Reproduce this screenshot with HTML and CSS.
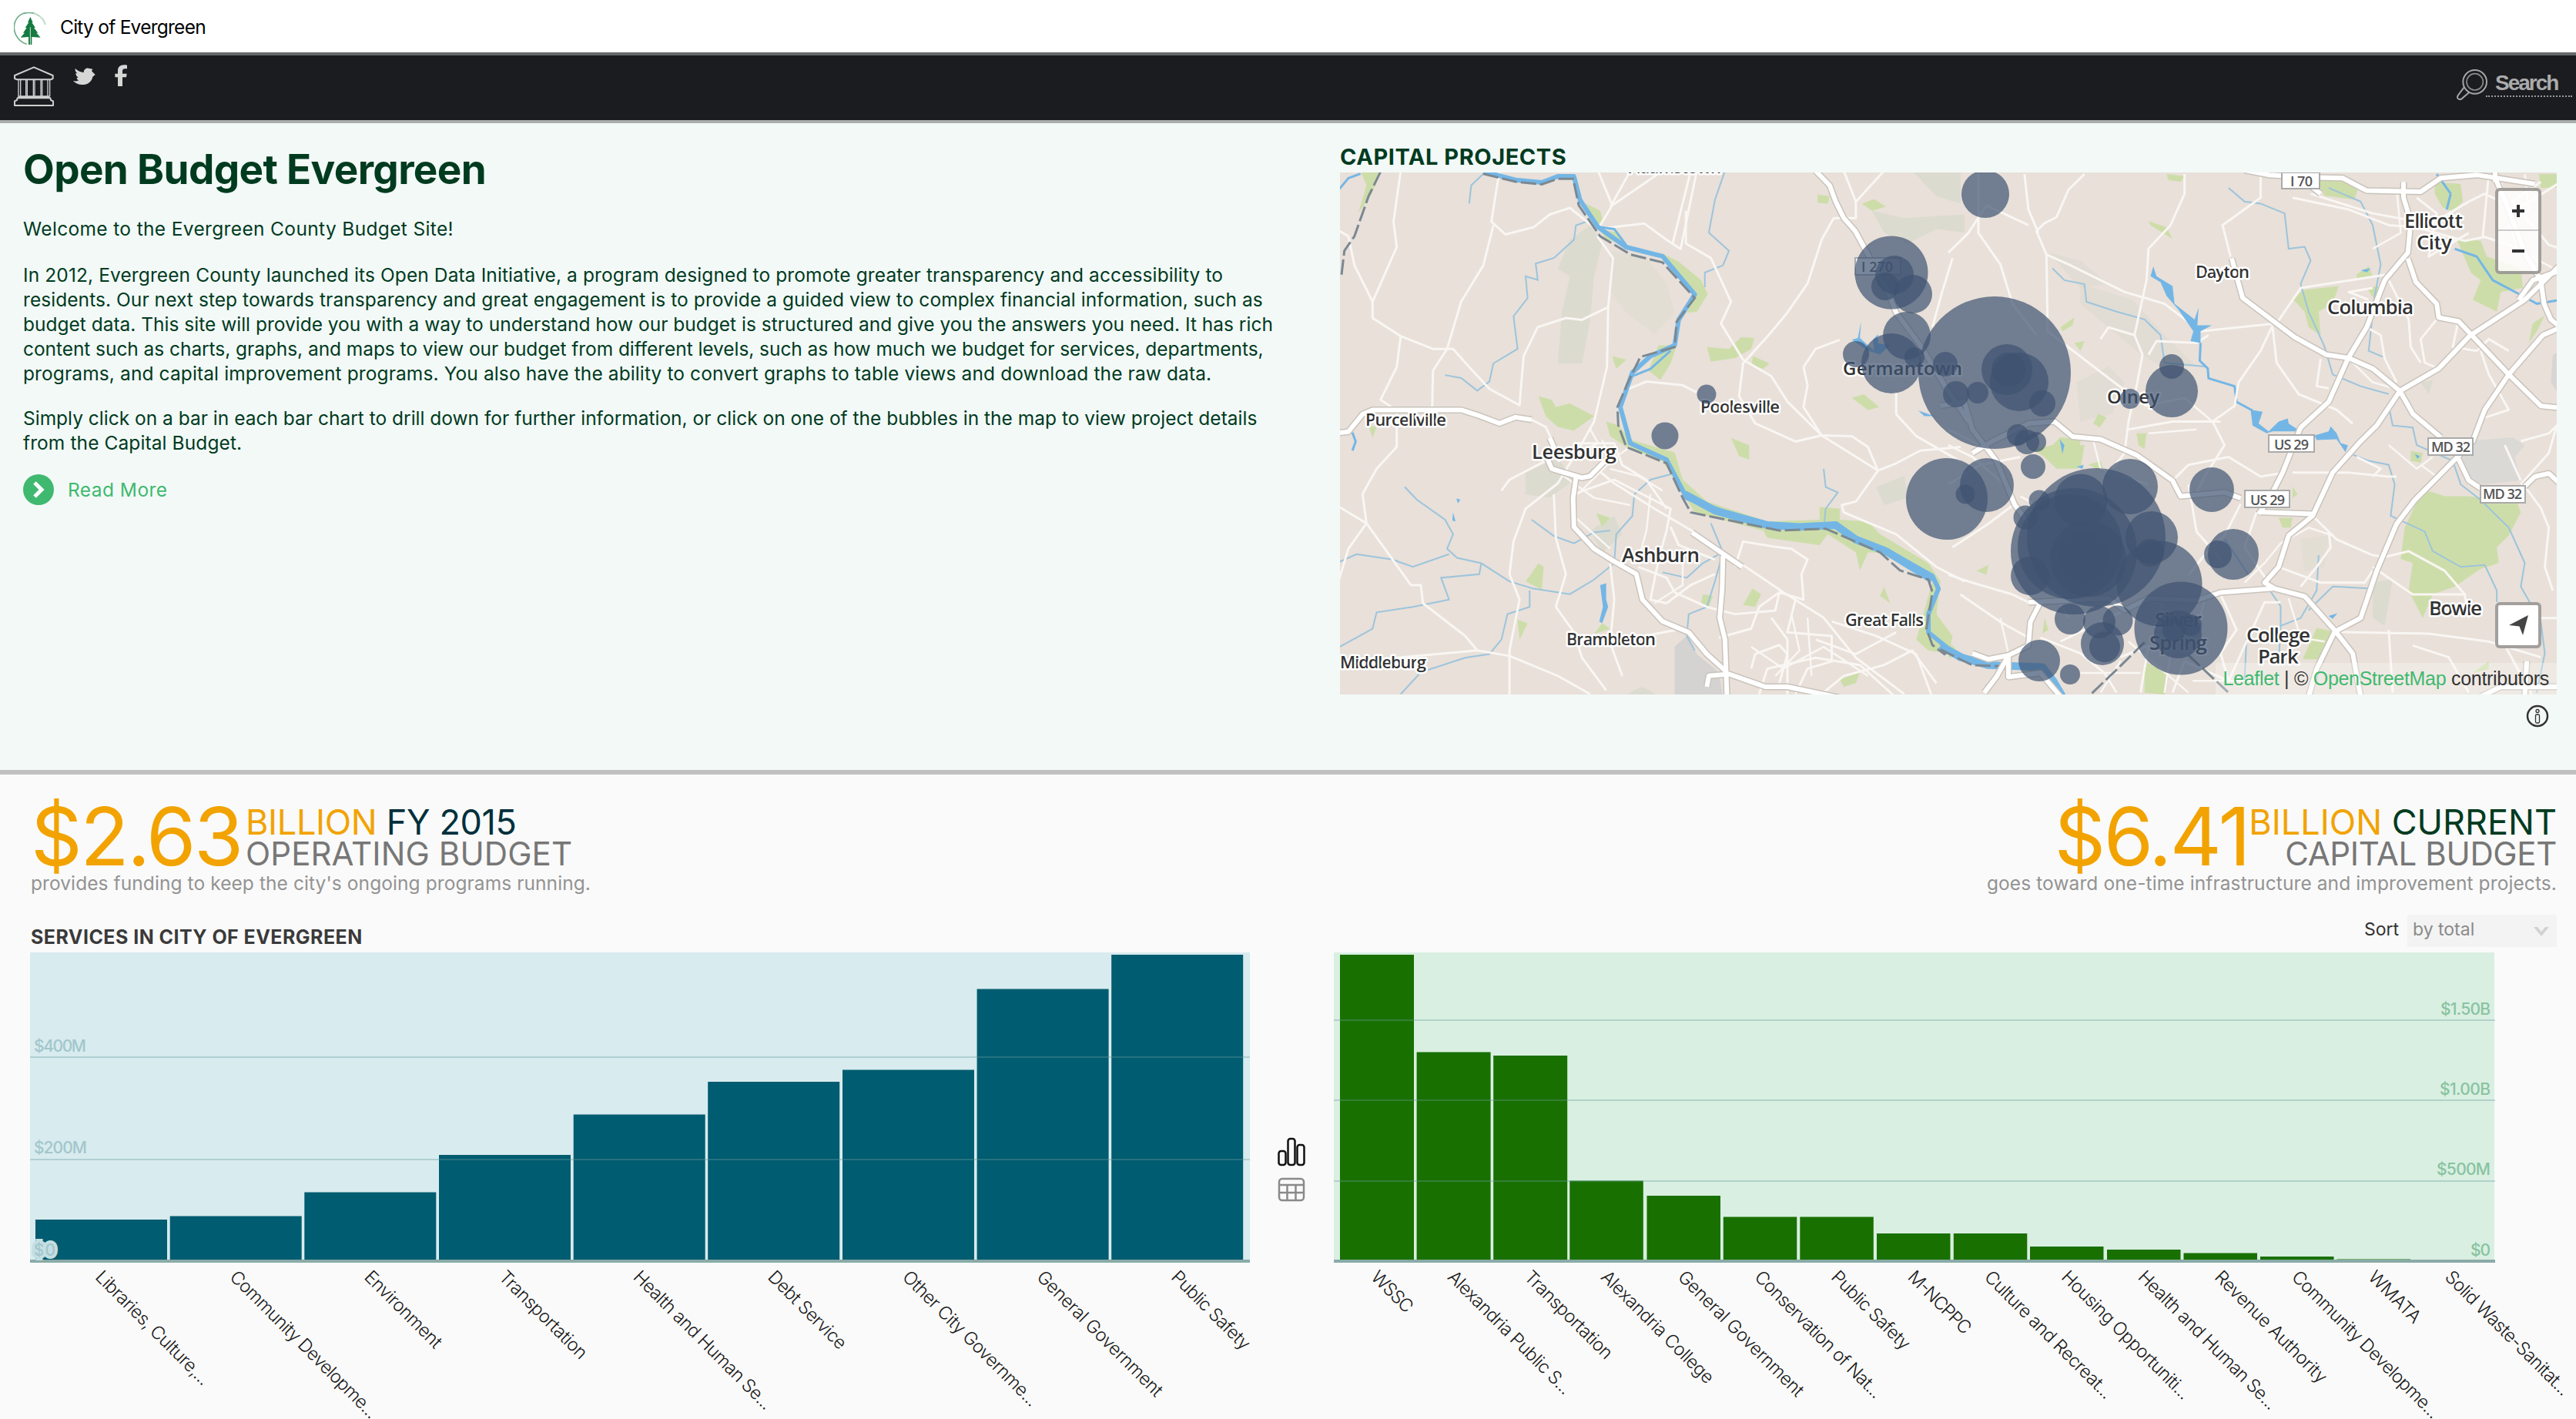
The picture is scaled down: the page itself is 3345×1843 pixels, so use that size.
FILE: index.html
```html
<!DOCTYPE html>
<html lang="en">
<head>
<meta charset="utf-8">
<title>City of Evergreen</title>
<link rel="stylesheet" href="styles.css">
</head>
<body>
<header class="site-header">
  <svg class="logo" width="42" height="42" viewBox="54 48 126 126">
    <path d="M176 96C166 58 128 42 92 52C58 64 46 104 62 136C70 152 84 166 104 172" fill="none" stroke="#6fae88" stroke-width="5"/>
    <path d="M176 100C170 72 152 56 132 51" fill="none" stroke="#fff" stroke-width="5" opacity=".6"/>
    <path d="M118 66L128 88L124 88L138 108L132 108L148 128L142 128L158 146L124 144V174H111V144L80 146L96 128L90 128L104 108L98 108L112 88L108 88Z" fill="#157a41"/>
    <path d="M118 106V174" stroke="#cfe6d7" stroke-width="3"/>
  </svg>
  <span class="site-name">City of Evergreen</span>
</header>
<nav class="navbar">
  <svg class="nav-home" width="52" height="52" viewBox="54 258 156 156" fill="none" stroke="#cfcfcf" stroke-width="6" stroke-linejoin="round">
    <path d="M132 262L206 294V306L198 310H66L57 306V294Z"/>
    <path d="M72 310V375M80 310V375M101 310V375M106 310V375M130 310V375M135 310V375M159 310V375M164 310V375M186 310V375M194 310V375" stroke-width="4"/>
    <path d="M70 376H194M68 382H196L198 390L207 394V411H57V394L66 390Z"/>
  </svg>
  <svg class="nav-tw" width="31" height="24" viewBox="283 262 93 72" fill="#d6d6d6"><path d="M294 268C302 276 314 282 327 284C326 272 338 262 350 268L362 270L358 278L372 292L362 300C358 322 340 332 318 331C304 330 292 324 286 316C294 318 302 318 308 314C302 312 300 308 300 304L306 303C298 298 296 292 296 286L302 287C295 281 293 275 294 268Z"/></svg>
  <svg class="nav-fb" width="16" height="28" viewBox="447 252 48 84" fill="#d6d6d6"><path d="M459 336V301H448V287H459V276C459 260 470 250 495 254V268C480 266 477 270 477 278V287H494L492 301H477V336Z"/></svg>
  <div class="search">
    <svg width="40" height="40" viewBox="135 90 120 120" fill="none" stroke="#a5a5a5">
      <circle cx="206" cy="139" r="46" stroke-width="6"/><circle cx="206" cy="139" r="32" stroke-width="5" stroke="#8a8a8a"/>
      <path d="M164 160L140 192Q134 204 146 207Q154 209 160 200L184 180" stroke-width="6"/>
    </svg>
    <span>Search</span>
  </div>
</nav>
<section class="hero">
  <div class="intro">
    <h1>Open Budget Evergreen</h1>
    <p class="welcome">Welcome to the Evergreen County Budget Site!</p>
    <p class="about"><span class="l1">In 2012, Evergreen County launched its Open Data Initiative, a program designed to promote greater transparency and accessibility to</span><br><span class="l2">residents. Our next step towards transparency and great engagement is to provide a guided view to complex financial information, such as</span><br><span class="l3">budget data. This site will provide you with a way to understand how our budget is structured and give you the answers you need. It has rich</span><br><span class="l4">content such as charts, graphs, and maps to view our budget from different levels, such as how much we budget for services, departments,</span><br><span class="l5">programs, and capital improvement programs. You also have the ability to convert graphs to table views and download the raw data.</span></p>
    <p class="howto"><span class="l6">Simply click on a bar in each bar chart to drill down for further information, or click on one of the bubbles in the map to view project details</span><br><span class="l7">from the Capital Budget.</span></p>
    <a class="more"><svg width="40" height="40" viewBox="0 0 40 40"><circle cx="20" cy="20" r="20" fill="#3fb96f"/><path d="M15 11L24 20L15 29" fill="none" stroke="#fff" stroke-width="5"/></svg><span>Read More</span></a>
  </div>
  <div class="projects">
    <h2>CAPITAL PROJECTS</h2>
    <div class="map">
    <svg width="1580" height="678" viewBox="0 0 1580 678">
      <defs>
        <g id="mainA" transform="matrix(.523 0 0 .4719 -10 -54)">
          <path d="M1200 110L1235 150L1250 195L1270 240L1298 275L1330 340L1370 420L1400 500L1460 590L1520 700L1580 800"/>
          <path d="M10 832L40 828L75 780L100 768L320 768L360 782L415 805L455 788L495 795"/>
          <path d="M540 845L550 870L535 905L545 930L620 955L640 950L680 905"/>
          <path d="M605 955L598 1010L600 1090L650 1150L700 1185L755 1220L770 1290L820 1350L885 1380L930 1440L980 1490"/>
          <path d="M970 1170L968 1260L962 1340L975 1400L980 1560"/><path d="M893 1105L1018 1200"/>
          <path d="M930 1530L935 1500L985 1495L1075 1530L1130 1530L1260 1560"/>
        </g>
        <g id="mainB" transform="matrix(.5198 0 0 .5102 790 -54)">
          <path d="M740 100L800 112L900 118L985 120L1045 152L1180 155L1230 120L1320 112L1465 135"/>
          <path d="M905 140L930 160"/><path d="M1137 130L1137 170L1155 230L1148 310L1090 380L1045 500L998 580L950 690L880 755L835 870L800 940L775 975"/>
          <path d="M708 325L735 425L800 475L865 525L945 570L1000 578L1060 605L1128 662L1160 720L1230 780"/>
          <path d="M1148 325L1168 385L1220 440L1225 475L1275 485L1400 620L1480 700L1530 705"/>
          <path d="M1530 340L1440 430L1302 522L1225 605L1128 662L1070 750L1030 790L960 870L910 980L850 1030L825 1110L790 1150L815 1165L890 1185L960 1265L1010 1330L1030 1440"/>
          <path d="M1530 500L1485 520L1400 620L1340 710L1310 790L1272 830L1165 940L1120 1000L1070 1120L1030 1240L965 1275L920 1370L900 1440"/>
          <path d="M1272 830L1300 890L1330 910M1440 905L1465 880L1500 872L1530 900"/>
          <path d="M-20 700L40 690L60 760L120 840L165 950L200 1000"/>
          <path d="M60 820L110 790L200 745L265 740L310 778L380 785L470 825L560 890L580 930L690 920L730 935M775 970L910 975"/>
          <path d="M200 1200L400 1190L440 1220L500 1190L620 1195L680 1175L810 1165"/>
          <path d="M60 1330L100 1345L150 1335L200 1310L205 1250L230 1200"/><path d="M90 1430L120 1390L150 1335L150 1390L230 1380L280 1440"/>
          <path d="M1366 100V130M1366 120L1400 200L1440 310L1480 380L1488 440L1505 480L1530 500M1530 355L1460 380L1425 430"/>
          <path d="M1445 1350L1440 1440M1330 1440L1380 1415L1530 1415"/>
        </g>
      </defs>
      <rect width="1580" height="678" fill="#e8e0d9"/>
      <g transform="matrix(.523 0 0 .4719 -10 -54)">
        <g class="wood">
          <path d="M590 300L640 260L670 310L650 400L640 520L620 640L560 640L570 500L590 400L560 380Z"/><path d="M1340 220L1420 240L1570 230V280L1500 270L1430 310L1370 280Z"/>
          <path d="M480 940L560 900L600 960L540 1010L480 1000Z"/><path d="M1350 980L1420 950L1430 1010L1370 1030Z"/><path d="M1440 110H1560V200L1500 180Z"/><path d="M640 1100L700 1060L720 1110L670 1160Z"/><path d="M850 1420L880 1390L905 1440L960 1490L970 1560H850Z" fill="#d4d3d2"/><path d="M740 1545L770 1530L820 1560H730Z"/>
          <path d="M690 330L780 350L830 420L850 500L800 560L730 500L690 440Z" opacity=".5"/>
        </g>
        <g class="park">
          <path d="M70 110L120 115L95 180L65 225L85 150Z"/><path d="M630 200L665 220L672 250L655 260Z"/><path d="M815 335L860 360L915 410L932 450L905 498L880 500L905 450L860 390Z"/><path d="M665 270L710 280L730 310L680 300Z"/>
          <path d="M512 730L545 740L555 760L590 750L650 785L600 825L560 815L530 785Z"/><path d="M930 595L985 600L1015 568L1048 570L1040 600L1000 625L940 635Z"/><path d="M1045 620L1085 640L1070 655L1040 645Z"/><path d="M695 620L730 630L705 655Z"/><path d="M810 590L855 590L840 640L815 685L785 660Z"/>
          <path d="M1205 175L1235 180L1230 200L1205 198Z"/><path d="M1315 200L1345 188L1375 208L1340 220Z"/><path d="M1290 735L1320 725L1358 760L1330 768Z"/><path d="M990 845L1035 865L1035 905L1010 895Z"/>
          <path d="M512 1190L525 1200L520 1262L480 1240Z"/><path d="M655 1052L690 1065L670 1090Z"/><path d="M1043 1260L1065 1275L1050 1310L1020 1305Z"/><path d="M460 1345L485 1355L465 1400Z"/><path d="M650 1385L670 1355L690 1370Z"/>
          <path d="M680 800L710 810L740 850L850 885L870 960L930 1020L1080 1075L1210 1070V1035L1260 1040L1260 1070L1330 1075L1360 1110L1480 1190L1510 1240L1500 1330L1540 1390L1530 1440L1480 1430L1450 1400L1490 1240L1360 1160L1330 1160L1310 1210L1300 1160L1230 1110L1210 1140L1080 1120L1070 1100L900 1050L850 960L820 910L730 870L690 840Z"/>
          <path d="M920 1275L945 1280L935 1310L915 1305Z"/><path d="M1370 1255L1385 1300L1360 1280Z"/><path d="M1260 1510L1310 1490L1300 1520L1270 1530Z"/><path d="M90 810L110 815L100 845Z"/>
        </g>
        <g class="stream">
          <path d="M630 250L605 260L600 300L550 350L505 365L510 410L480 400L485 460L450 510L460 600L400 640L390 690L360 715L320 680L280 672"/>
          <path d="M975 110L950 190L935 280L985 330L970 370L925 390L925 430"/><path d="M375 118L345 150L340 200"/>
          <path d="M180 980L210 1015L280 1070L300 1110L285 1150L310 1175L370 1190L440 1240L500 1260L590 1275L650 1235L700 1190L705 1110L745 1060L750 1000L790 960L840 945"/>
          <path d="M10 1190L60 1165L150 1180L200 1200L290 1165M370 1190L365 1220L270 1230L290 1290L200 1310L110 1325L100 1370L10 1425"/>
          <path d="M490 1265L490 1310L435 1330L420 1400L390 1440L330 1450L220 1490L170 1550"/><path d="M495 1070L550 1115L600 1135L650 1105L690 1100"/><path d="M940 1080L970 1160L950 1240L930 1310L885 1330L880 1390L900 1430"/><path d="M820 1215L880 1230L920 1190L960 1165"/><path d="M1220 930L1225 980L1255 995L1225 1040L1222 1075"/>
        </g>
        <g class="road">
          <path d="M170 110L152 250L160 320L100 470L100 515L170 565L250 600L300 600L340 650L390 710L465 755L475 620L510 540L580 515L620 520L685 485L697 350L658 290"/>
          <path d="M415 110L395 250L430 285L500 265L540 230L590 212L655 270L775 255L830 300L865 325L905 110M170 565L160 650L120 740L160 770V870L110 930L75 1000L85 1080L40 1150L10 1260"/>
          <path d="M400 260L375 370L320 470L285 600L250 660L248 760"/><path d="M660 110L695 205L820 110M695 205L665 260M740 110L690 210M845 310L890 110M878 220V310L940 350L990 470L965 530L1020 630L1090 675L1130 745L1215 838L1355 935L1400 915L1460 880L1560 870"/>
          <path d="M685 485L682 650L650 800L620 860L560 970L480 1040L450 1130L440 1220L465 1290L440 1430V1560"/>
          <path d="M1245 240L1215 300L1180 420L1130 500L1085 560L1020 640L1010 730L1050 805L1150 855L1215 838"/><path d="M1215 838L1290 840L1330 870L1355 935L1300 1020L1265 1030L1270 1050L1400 1110L1500 1200L1570 1240"/>
          <path d="M735 710L780 690L870 700L905 720M1170 650L1180 700L1170 760L1215 838M1170 650L1200 600L1260 575"/>
          <path d="M10 1030L85 1080L150 1180L195 1250H220L225 1300L330 1390L360 1430L10 1465M360 1430L440 1445L560 1500L640 1550"/>
          <path d="M495 795L530 815L545 850M10 270L40 290L55 370L100 470M550 1000L555 1120L580 1220L555 1310L600 1380L620 1450L680 1540"/>
          <path d="M650 925L700 970L800 1040L900 1105L1120 1270L1220 1340L1300 1450L1420 1550M600 1000L700 960L840 1040L830 1100L810 1180L790 1290L830 1300L890 1250L950 1220M600 860L700 860L720 920L780 960L830 1040"/>
          <path d="M760 1200L830 1230L850 1270L930 1310L1000 1330L1100 1320L1110 1270L1170 1290L1165 1220L1180 1180L1140 1150L1100 1145L1020 1130L1000 1200"/><path d="M690 1190L700 1290L690 1410L720 1500M775 1390L870 1370M960 1395L1040 1370L1060 1310L1110 1270"/>
          <path d="M1150 1290L1130 1380L1240 1390L1240 1460L1180 1480L1150 1550M1240 1350L1350 1390L1450 1440L1490 1560M1040 1480L1050 1440L1110 1415L1130 1440L1110 1520M1200 1400L1300 1440L1400 1380M1060 1550L1080 1480L1200 1450L1310 1470L1400 1560"/>
          <path d="M840 1090L860 1140L950 1180M1215 1550L1270 1500L1370 1470L1440 1430L1500 1520M1090 1340L1130 1400V1550M535 905L440 960L420 990M1540 350L1515 440L1490 540M1270 110L1300 195V240L1245 240M1300 195L1370 110M1400 720V780L1450 840L1560 910"/>
        </g>
        <g class="road small"><path d="M560 910L660 860L640 820M575 950L650 1010L740 1030M610 1000L700 900L740 870M670 850L690 900L640 950M690 930L760 950L820 990M790 1000L780 1100L760 1180M870 1170L870 1250L800 1300M600 1060L690 1150M1180 1340L1190 1500M1040 1420L1120 1480L1220 1420L1330 1500M1140 1330L1160 1430L1100 1500"/></g>
        <path class="river" d="M375 112L455 135L520 142L560 125L600 125L615 190L660 265L730 320L820 345L900 450L860 520L850 590L790 620L745 665L715 760L740 860L830 905L880 1010L1000 1060L1110 1090L1250 1085L1300 1120L1370 1150L1490 1225L1505 1260L1480 1330L1480 1380L1530 1425L1580 1455"/>
        <path class="river thick" d="M875 1000L950 1045L1080 1085L1160 1090L1250 1085L1300 1125L1380 1160L1490 1235"/>
        <path class="river thin" d="M10 170L40 130L70 118M745 675L790 655L840 605M665 265L700 270L730 315M50 830L58 855L50 880"/>
        <g class="water"><path d="M665 1250L680 1245V1290L685 1310L670 1355L663 1350L672 1310Z"/><path d="M1313 525L1310 570L1345 605L1342 575L1355 560L1355 585L1385 590L1360 615L1330 605L1290 575L1305 570Z"/><path d="M1455 770L1495 785L1470 785Z"/><path d="M308 1012L318 1015L312 1025ZM300 1050L306 1075L298 1072Z"/></g>
        <path class="border" d="M375 118L455 140L520 147L560 132L598 132L612 205L665 290L740 340L820 362L900 460L855 525L850 595L765 622L735 690L708 760L710 810L730 870L830 915L870 1010L890 1050L1000 1075L1110 1100L1225 1095L1360 1160L1410 1210L1480 1235L1490 1270L1475 1370L1490 1415L1520 1440L1535 1428L1580 1465"/>
        <path class="border" d="M120 112L90 180L55 290L30 330L22 405"/>
      </g>
      <g transform="matrix(.5198 0 0 .5102 790 -54)">
        <g class="wood"><path d="M330 390L460 430L540 520L620 600L530 600L470 560L330 440Z" opacity=".6"/><path d="M250 310L330 330L400 390L330 400Z" opacity=".6"/><path d="M320 640L400 600L440 640L410 720L330 740Z" opacity=".6"/><path d="M1060 1150L1110 1140L1090 1260L1060 1240Z"/><path d="M1180 640L1210 635L1200 670Z"/><path d="M1290 790L1410 780L1440 800L1415 830L1430 890L1335 900L1300 880L1275 830Z" fill="#dbd9d5"/><path d="M1510 570L1530 560V680L1505 640Z" fill="#d8d5d4"/><path d="M880 1040L950 1030L940 1110L890 1120Z" opacity=".5"/></g>
        <g class="park">
          <path d="M1185 912L1240 930L1300 930L1420 945L1430 970L1400 1030L1370 1060L1375 1100L1330 1115L1265 1160L1210 1180L1185 1240L1150 1170L1160 1100L1130 1090L1140 1010Z"/>
          <path d="M920 125L975 120L1025 140L1015 175L940 165Z"/><path d="M1215 130L1280 135L1285 180L1260 205L1235 195L1215 160Z"/><path d="M1270 275L1330 280L1345 320L1430 350L1435 400L1380 410L1370 460L1310 430L1330 380L1305 360Z"/><path d="M1475 110H1520V145H1480Z"/>
          <path d="M545 110L590 115L580 130L550 125Z"/><path d="M500 230L545 245L560 275L505 240Z"/><path d="M885 405L975 395L960 440L925 460L930 520L900 500L890 460L862 430Z"/><path d="M1020 365L1050 345L1060 370L1020 375Z"/><path d="M1045 400L1075 395L1065 430Z"/>
          <path d="M210 810L260 800L280 780L330 785L325 860L270 860L240 830Z"/><path d="M350 850L380 840L390 870Z"/><path d="M375 720L395 730L378 755L362 745Z"/><path d="M280 500L315 475L310 495L285 510Z"/><path d="M315 540L340 535L330 560Z"/><path d="M470 770L495 770L490 810L475 800Z"/><path d="M280 800L340 800L330 860Z"/>
          <path d="M825 985L860 985L855 1010L835 1010Z"/><path d="M920 1265L965 1275L930 1345L885 1345Z"/><path d="M1155 815L1185 820L1180 845L1155 840Z"/><path d="M490 1350L545 1380L540 1435L490 1430Z"/><path d="M860 905L872 925L860 935Z"/><path d="M1490 470L1470 510L1450 540L1460 490Z"/><path d="M1310 1380L1350 1350L1350 1370Z"/><path d="M0 1300L20 1320L10 1340H0Z"/><path d="M240 1240L250 1270L235 1280Z"/><path d="M70 1120L100 1105L95 1130Z"/>
        </g>
        <g class="stream">
          <path d="M700 145L740 180L780 185L840 210L850 300L890 295L905 330L880 390L900 460L940 550L960 620L1030 650L1100 670"/><path d="M260 350L290 380L340 390L345 435L420 460L490 480L530 520L540 590L640 600"/>
          <path d="M950 145L1030 180L1060 240L1080 340L1065 420L1050 560L1085 575"/><path d="M1000 820L1050 840L1100 850L1115 900L1105 980L1190 1020L1210 1070L1280 1110L1340 1105L1370 1170V1205"/>
          <path d="M1130 660L1100 700L1110 750L1160 755L1170 800L1260 840L1280 900L1330 940L1400 1010L1440 1100L1430 1160L1480 1250L1490 1330L1470 1430"/><path d="M925 1080L920 1170L880 1240L830 1260L825 1360M1060 1165L960 1160L900 1220M800 1165L830 1210V1260M690 1040L750 1130M745 1290L740 1400"/>
        </g>
        <path class="river thin" d="M1255 160L1245 200M1265 300L1320 320L1360 380L1425 415L1470 440L1530 430M1220 110L1255 160M630 540L628 585L648 605L650 630L715 650L720 690L760 712"/>
        <g class="road">
          <path d="M340 110L300 150L270 220L240 235L220 255L245 315L300 340L440 410L540 440L630 510L820 490L880 400L1100 365"/><path d="M190 110L200 200L225 260M75 110V260L130 340L160 440L220 520M0 310L50 260L95 190L200 240M590 110V160L555 240L500 300L495 380L465 520L485 570L470 650L450 740L440 820L410 860"/>
          <path d="M780 110V170L685 240L705 320M245 315L248 510L350 590L440 660M465 520L400 500L380 530M500 570L520 535L620 540L650 520"/><path d="M810 495L780 560L725 640L715 700L660 740L690 800L640 880L620 920"/>
          <path d="M810 500L820 590L875 670L970 710L1010 745M860 170L1000 200L1100 240L1170 245M905 160L1060 210L1140 225M1150 240L1290 280L1340 270L1430 300"/>
          <path d="M1200 240L1300 180L1340 160L1420 200L1530 130M1350 110L1335 270M1170 170L1220 210L1200 320L1300 260M1480 130L1410 180L1500 290L1530 300"/>
          <path d="M1045 500L1080 520L1090 580L1120 640M1100 380L1150 480L1155 550L1180 590M1220 480L1180 530L1190 590L1225 605M1050 430L1000 410L1060 400M1275 480L1260 550L1320 560L1350 530L1400 560M1330 560L1350 620L1400 710L1340 730"/>
          <path d="M930 580L920 650L950 655M840 870L780 880L700 830L600 850L560 890M860 870L1000 870L1100 880L1120 880M730 950L690 1030L640 1080L600 1130M770 970L740 1060L800 1150M1020 830L1080 860L1060 880M910 980L970 1040L1060 1080L1090 1085M1090 1085L1150 1070L1240 1120L1290 1180L1300 1240M825 1110L930 1150L1040 1150L1060 1120"/>
          <path d="M950 1020L955 1060L920 1110L880 1160M680 1180L720 1270L680 1330L700 1400M0 1130L60 1150L160 1180L200 1200M10 1060L100 1000L165 950M30 1180L130 1250L200 1290M230 1290L330 1330L390 1380L420 1430"/>
          <path d="M280 1300L500 1190M430 1340L500 1310L480 1430M560 1430L590 1350L700 1400L790 1200L830 1200M960 1275L1200 1280L1350 1300L1480 1340M1100 1270L1110 1430M1160 1310L1250 1340L1300 1430M1370 1200L1385 1300L1460 1440M1370 1205L1450 1240L1520 1240M1060 1110L1160 1180L1290 1180"/>
          <path d="M1390 800L1430 890M1430 900L1500 820L1520 750M1440 905L1480 960L1500 1010L1490 1110L1510 1170M1430 790L1500 770L1530 740M0 760L60 790L130 840M0 800L60 830L140 900M0 900L80 850L180 830M180 930L300 1000M600 900L620 1020L680 1090M680 740L560 740L450 760"/>
        </g>
        <g class="road small"><path d="M1380 130L1420 300L1530 360M1440 110L1450 200L1380 260M1120 150L1130 260L1060 300M490 700L590 680L660 740M500 770L620 760M360 780L380 860L500 900M1180 850L1220 880L1200 910M740 1150L790 1100L830 1050L900 1010L960 1030M530 1200L560 1300L540 1430M640 1200L620 1260M850 1190L880 1290L940 1300M330 1380L480 1380M610 1400L800 1400M380 1430L430 1350M450 1300L600 1430M210 1200L270 1190L300 1240M130 1240L150 1330M1210 830L1170 860L1100 800M1000 580L1060 640L1130 660"/></g>
        <g class="water"><path d="M512 345L520 370L560 395L565 440L615 480L625 450L622 495L658 495L630 510L630 540L605 535L612 510L575 455L545 420L530 385L505 370Z"/><path d="M755 710L785 715L775 745L800 765L825 740L848 732L850 745L880 765L810 765L795 770L760 750Z"/><path d="M915 775L950 765L955 752L970 770L980 795L998 800L992 818L970 785L920 787Z"/><path d="M278 785L290 800L285 822Z"/><path d="M320 855L338 850L335 860Z"/><path d="M1165 822L1178 828L1172 835Z"/><path d="M950 1235L972 1228L960 1242Z"/><path d="M1030 355L1055 350L1045 360Z"/></g>
        <path class="river thick" d="M-20 1310L30 1340L100 1360L235 1365L262 1400L285 1440"/>
        <path class="border" d="M490 1302L430 1362L350 1440M600 1335L700 1430M-20 1320L60 1360L140 1363"/>
      </g>
      <use href="#mainA" class="casing"/><use href="#mainB" class="casing"/>
      <use href="#mainA" class="core"/><use href="#mainB" class="core"/>
      <g class="shields"><rect x="669" y="111" width="59" height="22"/><rect x="1223" y="0" width="49" height="21"/><rect x="1206" y="341" width="59" height="22"/><rect x="1175" y="413" width="58" height="22"/><rect x="1413" y="345" width="58" height="22"/><rect x="1481" y="407" width="58" height="22"/></g>
      <g class="roadno"><text x="677" y="129" textLength="41">I 270</text><text x="1234" y="18" textLength="29">I 70</text><text x="1213" y="360" textLength="45">US 29</text><text x="1182" y="432" textLength="45">US 29</text><text x="1417" y="363" textLength="51">MD 32</text><text x="1484" y="424" textLength="51">MD 32</text></g>
      <g class="places">
        <text x="375" y="1" textLength="120">Adamstown</text>
        <text x="653" y="263" textLength="155" class="md">Germantown</text>
        <text x="468" y="312" textLength="103">Poolesville</text><text x="33" y="329" textLength="105">Purcellville</text><text x="249" y="372" textLength="110" class="lg">Leesburg</text>
        <text x="366" y="506" textLength="101" class="lg">Ashburn</text><text x="656" y="589" textLength="102">Great Falls</text><text x="294" y="614" textLength="116">Brambleton</text><text x="0" y="644" textLength="112">Middleburg</text>
        <text x="1111" y="137" textLength="70">Dayton</text><text x="1382" y="72" textLength="76" class="lg">Ellicott</text><text x="1398" y="100" textLength="46" class="lg">City</text><text x="1282" y="184" textLength="112" class="lg">Columbia</text><text x="996" y="300" textLength="68" class="md">Olney</text>
        <text x="1414" y="575" textLength="69" class="lg">Bowie</text><text x="1177" y="610" textLength="83" class="lg">College</text><text x="1192" y="638" textLength="53" class="lg">Park</text><text x="1058" y="590" textLength="61" class="lg">Silver</text><text x="1051" y="620" textLength="75" class="lg">Spring</text>
      </g>
      <g class="bubbles">
        <circle cx="838" cy="28" r="31"/><circle cx="716" cy="130" r="47.500"/><circle cx="720" cy="133" r="25"/><circle cx="708" cy="148" r="18"/><circle cx="744" cy="158" r="25"/>
        <circle cx="736" cy="212" r="31"/><circle cx="716" cy="248" r="39"/><circle cx="670" cy="236" r="17"/><circle cx="746" cy="240" r="13"/><circle cx="786" cy="249" r="16"/><circle cx="800" cy="288" r="17"/><circle cx="828" cy="286" r="14"/>
        <circle cx="850" cy="260" r="99"/><circle cx="866" cy="256" r="33"/><circle cx="868" cy="256" r="22"/><circle cx="882" cy="272" r="38"/><circle cx="912" cy="300" r="17"/><circle cx="880" cy="341" r="14"/><circle cx="892" cy="350" r="16"/><circle cx="904" cy="350" r="13"/><circle cx="900" cy="382" r="16"/>
        <circle cx="476" cy="288" r="12.500"/><circle cx="422" cy="342" r="17.500"/><circle cx="788" cy="424" r="53"/><circle cx="840" cy="406" r="35"/><circle cx="812" cy="418" r="12.500"/>
        <circle cx="1080" cy="252" r="16"/><circle cx="1080" cy="284" r="34"/><circle cx="1026" cy="294" r="13"/><circle cx="1132" cy="412" r="29"/><circle cx="1160" cy="496" r="33"/><circle cx="1140" cy="496" r="18"/>
        <circle cx="982" cy="474" r="90"/><circle cx="953" cy="492" r="82"/><circle cx="948" cy="486" r="68"/><circle cx="972" cy="502" r="49"/><circle cx="966" cy="500" r="33"/><circle cx="962" cy="426" r="34.500"/><circle cx="1026" cy="408" r="36"/><circle cx="1054" cy="474" r="34"/><circle cx="1052" cy="494" r="18"/><circle cx="908" cy="426" r="13.500"/><circle cx="890" cy="448" r="15.500"/><circle cx="896" cy="524" r="25"/>
        <circle cx="1064" cy="534" r="55.500"/><circle cx="1092" cy="592" r="60.500"/><circle cx="1088" cy="600" r="31"/><circle cx="1083" cy="594" r="15"/><circle cx="1105" cy="588" r="14"/><circle cx="948" cy="580" r="20"/><circle cx="986" cy="584" r="21"/><circle cx="1010" cy="582" r="19.500"/><circle cx="990" cy="612" r="28"/><circle cx="993" cy="616" r="20"/><circle cx="908" cy="634" r="27"/><circle cx="948" cy="652" r="13"/>
      </g>
    </svg>
    <div class="zoom"><svg width="52" height="104" viewBox="0 0 52 104"><path d="M0 51H52" stroke="#ccc" stroke-width="2"/><path d="M18 26H34M26 18V34M18 78H34" stroke="#333" stroke-width="4"/></svg></div>
    <div class="locate"><svg width="52" height="52" viewBox="0 0 52 52"><path d="M39 13L32 39L27.500 27.500L14 26Z" fill="#444"/></svg></div>
    <div class="credit"><a>Leaflet</a> | © <a>OpenStreetMap</a> contributors</div>
    </div>
    <svg class="info" width="30" height="30" viewBox="0 0 30 30" fill="none" stroke="#333"><circle cx="15" cy="15" r="13" stroke-width="2.500"/><circle cx="15" cy="8.500" r="2" stroke-width="1.300"/><rect x="12.500" y="13" width="5" height="11" rx="1.500" stroke-width="1.300"/></svg>
  </div>
</section>
<section class="budget">
  <div class="totals">
    <div class="total">
      <div class="figures"><span class="amount a1">$2.63</span><div class="what"><div class="unit u1"><b>BILLION</b> <i class="navy">FY 2015</i></div><div class="kind k1">OPERATING BUDGET</div></div></div>
      <p class="note n1">provides funding to keep the city's ongoing programs running.</p>
    </div>
    <div class="total right">
      <div class="figures"><span class="amount a2">$6.41</span><div class="what"><div class="unit u2"><b>BILLION</b> <i>CURRENT</i></div><div class="kind k2">CAPITAL BUDGET</div></div></div>
      <p class="note n2">goes toward one-time infrastructure and improvement projects.</p>
    </div>
  </div>
  <div class="bar-head"><h3>SERVICES IN CITY OF EVERGREEN</h3>
    <div class="sort"><span>Sort</span><div class="select"><span>by total</span><svg width="20" height="12" viewBox="0 0 20 12"><path d="M0 0H5L10 6L15 0H20L10 12Z" fill="#d2d2d2"/></svg></div></div>
  </div>
  <div class="charts">
    <svg class="chart" width="1584" height="606" viewBox="39 1237 1584 606">
      <rect x="39" y="1237" width="1584" height="400" fill="#d8ebee"/>
      <g fill="#005c70"><path d="M46 1584H217V1637H46Z"/><path d="M220.700 1579.500H391.700V1637H220.700Z"/><path d="M395.300 1548.500H566.300V1637H395.300Z"/><path d="M570 1500H741V1637H570Z"/><path d="M744.700 1447.500H915.700V1637H744.700Z"/><path d="M919.200 1405H1090.200V1637H919.200Z"/><path d="M1094 1389.500H1265V1637H1094Z"/><path d="M1268.600 1284.500H1439.600V1637H1268.600Z"/><path d="M1443.200 1240H1614.200V1637H1443.200Z"/></g>
      <path d="M39 1373H1623M39 1506H1623" class="grid"/><path d="M39 1638H1623" class="axis"/>
      <g class="ticks blue"><text x="44" y="1366" textLength="68">$400M</text><text x="44" y="1498" textLength="69">$200M</text><text x="44" y="1631" textLength="28" class="halo">$0</text></g>
      <g class="labels" transform="translate(-1.500 0)">
        <text transform="translate(124 1660) rotate(45)" textLength="199">Libraries, Culture,...</text>
        <text transform="translate(298.600 1660) rotate(45)" textLength="260">Community Developme...</text>
        <text transform="translate(473.300 1660) rotate(45)" textLength="131">Environment</text>
        <text transform="translate(648 1660) rotate(45)" textLength="151">Transportation</text>
        <text transform="translate(822.600 1660) rotate(45)" textLength="244">Health and Human Se...</text>
        <text transform="translate(997.300 1660) rotate(45)" textLength="133">Debt Service</text>
        <text transform="translate(1172 1660) rotate(45)" textLength="238">Other City Governme...</text>
        <text transform="translate(1346.500 1660) rotate(45)" textLength="220">General Government</text>
        <text transform="translate(1521 1660) rotate(45)" textLength="134">Public Safety</text>
      </g>
    </svg>
    <div class="tools">
      <svg width="36" height="38" viewBox="0 0 36 38" fill="none" stroke="#111" stroke-width="2.500"><rect x="1.500" y="18" width="9" height="18" rx="3"/><rect x="13.500" y="2" width="9" height="34" rx="3"/><rect x="25.500" y="10" width="9" height="26" rx="3"/></svg>
      <svg width="36" height="32" viewBox="0 0 36 32" fill="none" stroke="#8a8a8a" stroke-width="2.500"><rect x="2" y="2" width="32" height="28" rx="4"/><path d="M2 10H34M2 20H34M12.500 10V30M23.500 10V30"/></svg>
    </div>
    <svg class="chart" width="1613" height="606" viewBox="1732 1237 1613 606">
      <rect x="1732" y="1237" width="1507" height="400" fill="#d9efe2"/>
      <g fill="#187000"><path d="M1740 1240h96V1637h-96Z"/><path d="M1839.600 1366.500h96V1637h-96Z"/><path d="M1939.200 1371h96V1637h-96Z"/><path d="M2038.300 1533.500h95.500V1637h-95.500Z"/><path d="M2138.500 1553h95.500V1637h-95.500Z"/><path d="M2237.800 1580.500h95.500V1637h-95.500Z"/><path d="M2337.300 1580.500h95.500V1637h-95.500Z"/><path d="M2437 1602h95.500V1637H2437Z"/><path d="M2536.800 1602h95.500V1637h-95.500Z"/><path d="M2636 1619h95.500V1637H2636Z"/><path d="M2736 1623h95.500V1637H2736Z"/><path d="M2835.500 1627.500h95.500V1637h-95.500Z"/><path d="M2935 1632h95.500V1637H2935Z"/><path d="M3034.500 1635.500h95.500V1637h-95.500Z"/></g>
      <path d="M1732 1325H3240M1732 1429H3240M1732 1534H3240" class="grid"/><path d="M1732 1638H3240" class="axis"/>
      <g class="ticks green"><text x="3169" y="1318" textLength="65">$1.50B</text><text x="3168" y="1422" textLength="66">$1.00B</text><text x="3164" y="1526" textLength="70">$500M</text><text x="3208" y="1631" textLength="26">$0</text></g>
      <g class="labels" transform="translate(-1.500 0)">
        <text transform="translate(1780.500 1660) rotate(45)" textLength="66">WSSC</text>
        <text transform="translate(1880 1660) rotate(45)" textLength="216">Alexandria Public S...</text>
        <text transform="translate(1979.500 1660) rotate(45)" textLength="151">Transportation</text>
        <text transform="translate(2079 1660) rotate(45)" textLength="196">Alexandria College</text>
        <text transform="translate(2179 1660) rotate(45)" textLength="220">General Government</text>
        <text transform="translate(2278.500 1660) rotate(45)" textLength="223">Conservation of Nat...</text>
        <text transform="translate(2378 1660) rotate(45)" textLength="134">Public Safety</text>
        <text transform="translate(2477.500 1660) rotate(45)" textLength="105">M-NCPPC</text>
        <text transform="translate(2577 1660) rotate(45)" textLength="224">Culture and Recreat...</text>
        <text transform="translate(2677 1660) rotate(45)" textLength="225">Housing Opportuniti...</text>
        <text transform="translate(2776.500 1660) rotate(45)" textLength="244">Health and Human Se...</text>
        <text transform="translate(2876 1660) rotate(45)" textLength="195">Revenue Authority</text>
        <text transform="translate(2976 1660) rotate(45)" textLength="260">Community Developme...</text>
        <text transform="translate(3075.500 1660) rotate(45)" textLength="85">WMATA</text>
        <text transform="translate(3175 1660) rotate(45)" textLength="218">Solid Waste-Sanitat...</text>
      </g>
    </svg>
  </div>
</section>
</body>
</html>
```
FILE: styles.css
```css
* { box-sizing: border-box; margin: 0; padding: 0; }
body { width: 3345px; height: 1843px; overflow: hidden; font-family: Inter, "Open Sans", sans-serif; font-size: 24.5px; line-height: 32px; background: #fafafa; color: #000; white-space: nowrap; }
svg { display: block; flex: none; }
.site-header { height: 68px; background: #fff; display: flex; align-items: flex-start; padding: 16px 18px; gap: 18px; }
.site-name { line-height: 38px; letter-spacing: -.75px; }
.navbar { height: 92px; background: #1b1c20; border-top: 4px solid #67686b; border-bottom: 4px solid #a9aeab; display: flex; align-items: flex-start; padding: 14px 5px 0 18px; }
.nav-tw { margin: 1px 0 0 24px; }
.nav-fb { margin: -2px 0 0 24px; }
.search { margin: 4px 0 0 auto; display: flex; align-items: flex-start; }
.search span { height: 36px; width: 112px; padding-left: 12px; margin-left: -2px; font: bold 28px/36px "Liberation Sans", Arial, sans-serif; letter-spacing: -2px; color: #ababab; border-bottom: 2px dotted #9a9a9a; }
.hero { height: 846px; background: #f3f9f7; border-bottom: 6px solid #c1c1c1; display: flex; justify-content: space-between; padding: 24px 25px 0 30px; color: #003b1f; }
h1 { font-size: 53px; line-height: 64px; margin-top: 4px; letter-spacing: -.65px; }
.welcome { margin-top: 29px; letter-spacing: .35px; }
.about { margin-top: 28px; }
.l1 { letter-spacing: .11px; }
.l2 { letter-spacing: .06px; }
.l4 { letter-spacing: -.06px; }
.l5 { letter-spacing: .115px; }
.l7 { letter-spacing: .1px; }
.howto { margin-top: 26px; }
.more { display: flex; align-items: center; gap: 18px; height: 42px; margin-top: 24px; color: #3fb96f; letter-spacing: .45px; }
.projects { width: 1580px; }
h2 { font-size: 29px; line-height: 40px; letter-spacing: .55px; }
.map { position: relative; width: 1580px; height: 678px; overflow: hidden; }
.map path { vector-effect: non-scaling-stroke; }
.wood { fill: #dcdbd0; }
.park { fill: #cddda9; }
.water { fill: #73b6e6; }
.stream { fill: none; stroke: #9cc4dc; stroke-width: 2px; }
.road { fill: none; stroke: #f9f6f3; stroke-width: 3px; stroke-linejoin: round; }
.road.small { stroke-width: 2.500px; }
.river { fill: none; stroke: #73b6e6; stroke-width: 6px; stroke-linejoin: round; }
.river.thick { stroke-width: 10px; }
.river.thin { stroke-width: 3px; }
.border { fill: none; stroke: #7c8891; stroke-width: 3px; stroke-dasharray: 20 5; }
.casing { fill: none; stroke: #c9c3bb; stroke-width: 9px; stroke-linejoin: round; }
.core { fill: none; stroke: #fff; stroke-width: 6px; stroke-linejoin: round; }
.shields { fill: #fff; stroke: #aaa; stroke-width: 2px; }
.roadno { font: 600 18px "Open Sans", sans-serif; fill: #555; }
.places { font: 600 22px "Open Sans", sans-serif; fill: #333; stroke: #fff; stroke-width: 5px; stroke-linejoin: round; paint-order: stroke; }
.places .md { font-size: 24px; }
.places .lg { font-size: 26px; }
.bubbles { fill: #3f5371; fill-opacity: .7; }
.zoom, .locate { position: absolute; right: 20px; border: 4px solid rgba(100, 95, 90, .6); border-radius: 6px; background: rgba(255, 255, 255, .85); }
.zoom { top: 20px; }
.locate { bottom: 60px; background: #fff; }
.credit { position: absolute; right: 0; bottom: 0; height: 41px; padding: 0 10px; background: rgba(255, 255, 255, .3); font: 25px/40px "Liberation Sans", Arial, sans-serif; color: #333; letter-spacing: -.300px; }
.credit a { color: #3fb96f; }
.info { margin: 13px 10px 0 auto; }
.totals { display: flex; justify-content: space-between; padding: 42px 25px 0 40px; }
.figures { display: flex; height: 80px; }
.right .figures { justify-content: flex-end; }
.right { text-align: right; }
.amount { font-size: 104px; line-height: 76px; font-weight: 400; color: #f2a300; letter-spacing: -2.500px; }
.a1 { width: 279px; }
.unit { font-size: 45px; line-height: 40px; color: #003b1f; }
.u1 { letter-spacing: -.35px; }
.unit b { font-weight: 400; color: #f2a300; }
.unit i { font-style: normal; }
.unit .navy { color: #00303c; }
.kind { font-size: 42px; line-height: 42px; color: #777; }
.k1 { letter-spacing: .1px; }
.k2 { letter-spacing: -.35px; }
.note { margin-top: 3px; color: #939393; }
.n1 { letter-spacing: .08px; }
.n2 { letter-spacing: .1px; }
.bar-head { display: flex; justify-content: space-between; align-items: flex-start; height: 74px; padding: 25px 25px 0 40px; }
h3 { margin-top: 12px; line-height: 34px; color: #3a3a3a; font-size: 25px; letter-spacing: .45px; }
.sort { display: flex; height: 42px; line-height: 39px; font-size: 23px; color: #333; gap: 11px; }
.select { display: flex; justify-content: space-between; width: 194px; padding: 0 10px 0 7px; background: #f3f3f3; color: #8a8a8a; }
.select svg { margin-top: 16px; }
.charts { display: flex; padding-left: 39px; }
.chart { overflow: visible; }
.grid { stroke: #6a9a9d; stroke-opacity: .35; stroke-width: 2px; }
.axis { stroke: #8aaba8; stroke-width: 4px; }
.ticks { font-size: 21px; font-weight: 500; }
.blue { fill: #a2c6cc; }
.green { fill: #88c3a0; }
.halo { stroke: #c4dfe4; stroke-width: 8px; paint-order: stroke; }
.labels { font-size: 23.500px; font-weight: 300; fill: #1a1a1a; }
.tools { width: 109px; padding: 240px 0 0 36px; display: flex; flex-direction: column; gap: 14px; }
```
